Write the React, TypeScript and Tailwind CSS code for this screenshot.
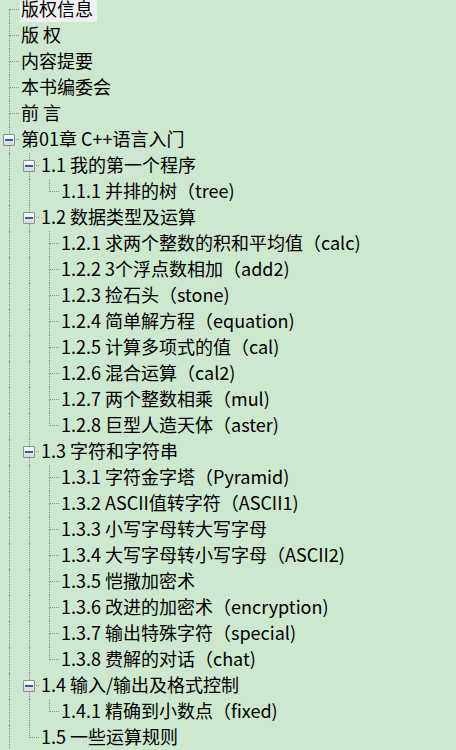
import React from "react";
import clsx from "clsx";

type Node = {
  label: string;
  selected?: boolean;
  continues?: boolean;
  children?: Node[];
};

const tree: Node[] = [
  { label: "版权信息", selected: true },
  { label: "版 权" },
  { label: "内容提要" },
  { label: "本书编委会" },
  { label: "前 言" },
  {
    label: "第01章 C++语言入门",
    continues: true,
    children: [
      {
        label: "1.1 我的第一个程序",
        children: [{ label: "1.1.1 并排的树（tree)" }],
      },
      {
        label: "1.2 数据类型及运算",
        children: [
          { label: "1.2.1 求两个整数的积和平均值（calc)" },
          { label: "1.2.2 3个浮点数相加（add2)" },
          { label: "1.2.3 捡石头（stone)" },
          { label: "1.2.4 简单解方程（equation)" },
          { label: "1.2.5 计算多项式的值（cal)" },
          { label: "1.2.6 混合运算（cal2)" },
          { label: "1.2.7 两个整数相乘（mul)" },
          { label: "1.2.8 巨型人造天体（aster)" },
        ],
      },
      {
        label: "1.3 字符和字符串",
        children: [
          { label: "1.3.1 字符金字塔（Pyramid)" },
          { label: "1.3.2 ASCII值转字符（ASCII1)" },
          { label: "1.3.3 小写字母转大写字母" },
          { label: "1.3.4 大写字母转小写字母（ASCII2)" },
          { label: "1.3.5 恺撒加密术" },
          { label: "1.3.6 改进的加密术（encryption)" },
          { label: "1.3.7 输出特殊字符（special)" },
          { label: "1.3.8 费解的对话（chat)" },
        ],
      },
      {
        label: "1.4 输入/输出及格式控制",
        children: [{ label: "1.4.1 精确到小数点（fixed)" }],
      },
      { label: "1.5 一些运算规则" },
    ],
  },
];

type Row = {
  node: Node;
  guides: boolean[]; // one per ancestor level: draw pass-through line?
  last: boolean;
  firstRoot: boolean;
};

function flatten(nodes: Node[], guides: boolean[], out: Row[]) {
  nodes.forEach((node, i) => {
    const last = i === nodes.length - 1 && !node.continues;
    out.push({ node, guides, last, firstRoot: guides.length === 0 && i === 0 });
    if (node.children) flatten(node.children, [...guides, !last], out);
  });
  return out;
}

const line = "border-dotted border-[#8e8e8e]";

function ExpandBox() {
  return (
    <div className="absolute left-[3px] top-[7px] flex h-[12px] w-[12px] items-center justify-center rounded-[1px] border border-[#8f8f8f] bg-linear-to-b from-white to-[#d6d6d6]">
      <span className="h-[1.5px] w-[8px] bg-[#2d5cb3]" />
    </div>
  );
}

function TreeRow({ row }: { row: Row }) {
  const { node, guides, last, firstRoot } = row;
  return (
    <div className="flex h-[26px]">
      {guides.map((g, i) => (
        <div key={i} className="h-full w-5 shrink-0">
          {g && <div className={clsx("ml-[9px] h-full border-l", line)} />}
        </div>
      ))}
      <div className="relative h-full w-5 shrink-0">
        <div
          className={clsx(
            "ml-[9px] h-[13px] w-[10px] border-b",
            !firstRoot && "border-l",
            line
          )}
        />
        {!last && <div className={clsx("ml-[9px] h-[13px] border-l", line)} />}
        {node.children && <ExpandBox />}
      </div>
      <div
        className={clsx(
          "mt-px h-[24px] whitespace-nowrap pl-px pr-[4px]",
          node.selected && "bg-[#f0f0f0]"
        )}
      >
        <span className="mt-[2px] block leading-[16px]">{node.label}</span>
      </div>
    </div>
  );
}

export default function App() {
  const rows = flatten(tree, [], []);
  return (
    <div className="h-[750px] overflow-hidden bg-[#cce8cf] font-['Noto_Sans_CJK_SC','Noto_Sans',sans-serif] text-[18px] text-black">
      <div className="-mt-[3px]">
        {rows.map((row, i) => (
          <TreeRow key={i} row={row} />
        ))}
      </div>
    </div>
  );
}
